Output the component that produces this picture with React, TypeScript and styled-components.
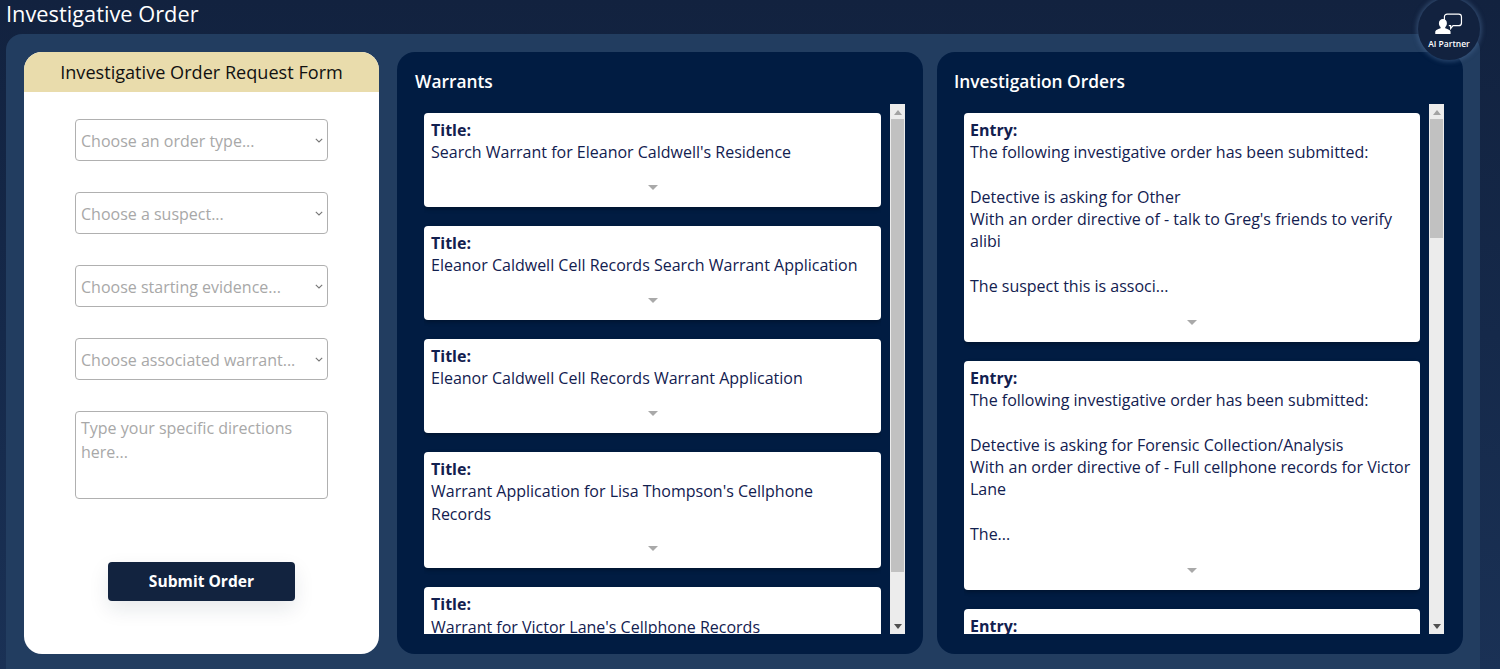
import styled, { createGlobalStyle } from 'styled-components';

const GlobalStyle = createGlobalStyle`
  html, body {
    margin: 0;
    padding: 0;
    height: 100%;
    overflow: hidden;
    font-family: 'Open Sans', 'Noto Sans', sans-serif;
  }
  * {
    box-sizing: border-box;
  }
`;

const warrants = [
  { body: ["Search Warrant for Eleanor Caldwell's Residence"] },
  { body: ['Eleanor Caldwell Cell Records Search Warrant Application'] },
  { body: ['Eleanor Caldwell Cell Records Warrant Application'] },
  { body: ["Warrant Application for Lisa Thompson's Cellphone", 'Records'] },
  { body: ["Warrant for Victor Lane's Cellphone Records"] },
];

const orders = [
  {
    body: [
      'The following investigative order has been submitted:',
      '',
      'Detective is asking for Other',
      "With an order directive of - talk to Greg's friends to verify",
      'alibi',
      '',
      'The suspect this is associ...',
    ],
  },
  {
    body: [
      'The following investigative order has been submitted:',
      '',
      'Detective is asking for Forensic Collection/Analysis',
      'With an order directive of - Full cellphone records for Victor',
      'Lane',
      '',
      'The...',
    ],
  },
  { body: ['The following investigative order has been submitted:'] },
];

const selects = [
  'Choose an order type...',
  'Choose a suspect...',
  'Choose starting evidence...',
  'Choose associated warrant...',
];

const Panel = ({
  title,
  label,
  items,
  thumb,
}: {
  title: string;
  label: string;
  items: { body: string[] }[];
  thumb: number;
}) => (
  <ListPanel>
    <PanelTitle>{title}</PanelTitle>
    <ListRow>
      <List>
        {items.map((item, i) => (
          <Card key={i}>
            <CardLabel>{label}</CardLabel>
            {item.body.map((line, j) => (
              <CardLine key={j}>{line}</CardLine>
            ))}
            <Caret />
          </Card>
        ))}
      </List>
      <Scrollbar>
        <ArrowUp />
        <Thumb $height={thumb} />
        <ArrowDown />
      </Scrollbar>
    </ListRow>
  </ListPanel>
);

export default function App() {
  return (
    <Page>
      <GlobalStyle />
      <Header>Investigative Order</Header>
      <Partner>
        <svg width="28" height="22" viewBox="0 0 30 24" fill="none">
          <path
            d="M10 9.5V4.2C10 2.4 11.2 1.2 13 1.2h12.6c1.8 0 3 1.2 3 3v6.6c0 1.8-1.2 3-3 3h-6.2l-2.6 3.2v-3.2h-2"
            stroke="#fff"
            strokeWidth="1.3"
          />
          <path
            d="M8.5 6.5c2.7 0 4.2 2 4.2 4.6 0 1.8-.8 3.4-1.8 4.3v1.3c2 .8 5.2 1.7 5.8 3.4V23H0v-2.9c.6-1.7 3.8-2.6 5.8-3.4v-1.3c-1-.9-1.8-2.5-1.8-4.3 0-2.6 1.8-4.6 4.5-4.6z"
            fill="#fff"
          />
        </svg>
        <PartnerText>AI Partner</PartnerText>
      </Partner>
      <Shell>
        <FormCard>
          <FormHeader>Investigative Order Request Form</FormHeader>
          <FormBody>
            {selects.map((s) => (
              <SelectWrap key={s}>
                <Select defaultValue="">
                  <option value="" disabled>
                    {s}
                  </option>
                </Select>
                <Chevron width="8" height="5" viewBox="0 0 8 5" fill="none">
                  <path d="M.8.8 4 4l3.2-3.2" stroke="#777" strokeWidth="1.1" />
                </Chevron>
              </SelectWrap>
            ))}
            <Directions placeholder="Type your specific directions here..." />
            <Submit type="button">Submit Order</Submit>
          </FormBody>
        </FormCard>
        <Panel title="Warrants" label="Title:" items={warrants} thumb={453} />
        <Panel title="Investigation Orders" label="Entry:" items={orders} thumb={119} />
      </Shell>
    </Page>
  );
}

const Page = styled.div`
  position: relative;
  width: 1500px;
  height: 669px;
  overflow: hidden;
  background: linear-gradient(180deg, #12223f 0%, #15294a 50%, #1a3155 100%);
`;

const Header = styled.h1`
  margin: 0;
  height: 34px;
  padding-left: 6px;
  color: #fff;
  font-size: 21.8px;
  font-weight: 400;
  line-height: 27px;
`;

const Partner = styled.div`
  position: absolute;
  top: -2px;
  left: 1418px;
  width: 62px;
  height: 62px;
  padding-top: 15px;
  border-radius: 50%;
  background: #12223f;
  box-shadow: 0 0 4px 2px rgba(70, 100, 140, 0.55);
  display: flex;
  flex-direction: column;
  align-items: center;
  z-index: 2;
`;

const PartnerText = styled.span`
  margin-top: 3px;
  color: #fff;
  font-size: 8.5px;
  font-weight: 600;
  line-height: 11px;
  white-space: nowrap;
`;

const Shell = styled.main`
  margin-left: 6px;
  width: 1474px;
  height: 660px;
  padding: 18px;
  border-radius: 16px 16px 0 0;
  background: #223d60;
  display: flex;
  align-items: flex-start;
  gap: 18px;
`;

const FormCard = styled.section`
  flex: none;
  width: 355px;
  height: 602px;
  border-radius: 18px;
  background: #fff;
  overflow: hidden;
`;

const FormHeader = styled.h2`
  margin: 0;
  height: 40px;
  background: #e9dcac;
  color: #111;
  font-size: 18.13px;
  font-weight: 400;
  line-height: 40px;
  text-align: center;
`;

const FormBody = styled.div`
  padding-top: 27px;
  display: flex;
  flex-direction: column;
  align-items: center;
`;

const SelectWrap = styled.div`
  position: relative;
  width: 253px;
  height: 42px;
  margin-bottom: 31px;
`;

const Select = styled.select`
  appearance: none;
  width: 100%;
  height: 100%;
  padding: 2px 20px 0 5px;
  border: 1px solid #b0b0b0;
  border-radius: 4px;
  background: #fff;
  color: #a8a8a8;
  font-family: inherit;
  font-size: 16px;
  outline: none;
`;

const Chevron = styled.svg`
  position: absolute;
  top: 19px;
  right: 5px;
  pointer-events: none;
`;

const Directions = styled.textarea`
  width: 253px;
  height: 88px;
  padding: 4px 5px;
  border: 1px solid #b0b0b0;
  border-radius: 4px;
  color: #a8a8a8;
  font-family: inherit;
  font-size: 16px;
  line-height: 24px;
  resize: none;
  outline: none;
  &::placeholder {
    color: #a8a8a8;
  }
`;

const Submit = styled.button`
  width: 187px;
  height: 39px;
  margin-top: 63px;
  padding-bottom: 2px;
  border: none;
  border-radius: 4px;
  background: #12233f;
  color: #fff;
  font-family: inherit;
  font-size: 15.6px;
  font-weight: 700;
  box-shadow: 0 8px 20px rgba(18, 35, 63, 0.1);
`;

const ListPanel = styled.section`
  flex: none;
  width: 526px;
  height: 602px;
  border-radius: 18px;
  background: #011c42;
  padding: 15px 18px 20px 27px;
  display: flex;
  flex-direction: column;
  & + & {
    margin-left: -4px;
    padding-right: 19px;
    --card-inset: 6px;
    --card-bottom: 44.6px;
    --title-shift: -10px;
  }
`;

const PanelTitle = styled.h2`
  margin: 0 0 0 var(--title-shift, -9px);
  height: 37px;
  color: #fff;
  font-size: 17.33px;
  font-weight: 600;
  line-height: 28px;
`;

const ListRow = styled.div`
  flex: 1;
  min-height: 0;
  display: flex;
  gap: 9px;
`;

const List = styled.div`
  flex: 1;
  min-width: 0;
  padding-top: 9px;
  overflow: hidden;
  display: flex;
  flex-direction: column;
  gap: 19px;
`;

const Card = styled.article`
  flex: none;
  padding: 6px var(--card-inset, 7px) var(--card-bottom, 43.4px);
  position: relative;
  border-radius: 4px;
  background: #fff;
  color: #12204f;
  font-size: 16px;
  line-height: 22.3px;
  box-shadow: 0 2px 4px rgba(0, 0, 0, 0.3);
`;

const CardLabel = styled.div`
  font-weight: 700;
`;

const CardLine = styled.div`
  min-height: 22.3px;
  white-space: nowrap;
`;

const Caret = styled.span`
  position: absolute;
  left: 50%;
  bottom: 17px;
  margin-left: -5px;
  border-left: 5px solid transparent;
  border-right: 5px solid transparent;
  border-top: 5px solid #a9a9a9;
`;

const Scrollbar = styled.div`
  flex: none;
  width: 15px;
  background: #ececec;
  display: flex;
  flex-direction: column;
  align-items: center;
`;

const ArrowUp = styled.span`
  margin: 6px 0 4px;
  border-left: 4px solid transparent;
  border-right: 4px solid transparent;
  border-bottom: 5px solid #a3a3a3;
`;

const Thumb = styled.div<{ $height: number }>`
  width: 13px;
  height: ${(p) => p.$height}px;
  background: #c1c1c1;
`;

const ArrowDown = styled.span`
  margin-top: auto;
  margin-bottom: 5px;
  border-left: 4px solid transparent;
  border-right: 4px solid transparent;
  border-top: 5px solid #505050;
`;
